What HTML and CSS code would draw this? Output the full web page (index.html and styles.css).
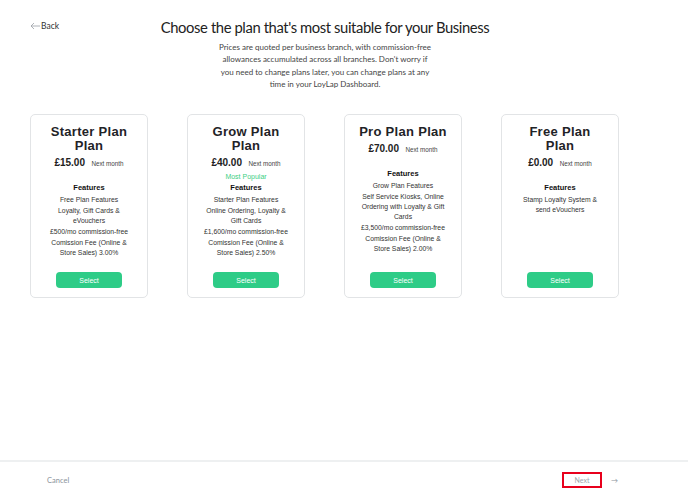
FILE: index.html
```html
<!DOCTYPE html>
<html>
<head>
    <title>Choose a plan</title>
    <link rel="stylesheet" href="styles.css">
</head>
<body>
    <div class="page">
        <div class="content">
            <a class="back" href="#">
                <svg width="10" height="8" viewBox="0 0 10 8"><path d="M10 4H1M4 1L1 4l3 3" fill="none" stroke="#9aa0a6" stroke-width="0.8"/></svg>
                Back
            </a>
            <h1>Choose the plan that's most suitable for your Business</h1>
            <p class="intro">Prices are quoted per business branch, with commission-free allowances accumulated across all branches. Don't worry if you need to change plans later, you can change plans at any time in your LoyLap Dashboard.</p>

            <div class="plans">
                <div class="plan">
                    <h2>Starter Plan Plan</h2>
                    <div class="price"><strong>£15.00</strong> <span>Next month</span></div>
                    <div class="popular"></div>
                    <h3>Features</h3>
                    <ul>
                        <li>Free Plan Features</li>
                        <li>Loyalty, Gift Cards &amp; eVouchers</li>
                        <li>£500/mo commission-free</li>
                        <li>Comission Fee (Online &amp; Store Sales) 3.00%</li>
                    </ul>
                    <button class="select">Select</button>
                </div>
                <div class="plan">
                    <h2>Grow Plan Plan</h2>
                    <div class="price"><strong>£40.00</strong> <span>Next month</span></div>
                    <div class="popular">Most Popular</div>
                    <h3>Features</h3>
                    <ul>
                        <li>Starter Plan Features</li>
                        <li>Online Ordering, Loyalty &amp; Gift Cards</li>
                        <li>£1,600/mo commission-free</li>
                        <li>Comission Fee (Online &amp; Store Sales) 2.50%</li>
                    </ul>
                    <button class="select">Select</button>
                </div>
                <div class="plan">
                    <h2>Pro Plan Plan</h2>
                    <div class="price"><strong>£70.00</strong> <span>Next month</span></div>
                    <div class="popular"></div>
                    <h3>Features</h3>
                    <ul>
                        <li>Grow Plan Features</li>
                        <li>Self Service Kiosks, Online Ordering with Loyalty &amp; Gift Cards</li>
                        <li>£3,500/mo commission-free</li>
                        <li>Comission Fee (Online &amp; Store Sales) 2.00%</li>
                    </ul>
                    <button class="select">Select</button>
                </div>
                <div class="plan">
                    <h2>Free Plan Plan</h2>
                    <div class="price"><strong>£0.00</strong> <span>Next month</span></div>
                    <div class="popular"></div>
                    <h3>Features</h3>
                    <ul>
                        <li>Stamp Loyalty System &amp; send eVouchers</li>
                    </ul>
                    <button class="select">Select</button>
                </div>
            </div>
        </div>

        <div class="footer">
            <a class="cancel" href="#">Cancel</a>
            <div class="next-wrap">
                <button class="next">Next</button>
                <span class="arrow">&rarr;</span>
            </div>
        </div>
    </div>
</body>
</html>
```

FILE: styles.css
```css
html, body {
    margin: 0;
    padding: 0;
    background: #fff;
}

body {
    font-family: "Lato", "Liberation Sans", sans-serif;
    color: #222;
}

.page {
    height: 100vh;
    display: flex;
    flex-direction: column;
}

.content {
    flex: 1;
    width: 650px;
    position: relative;
}

.back {
    position: absolute;
    left: 30px;
    top: 21px;
    font-size: 8.5px;
    color: #333;
    text-decoration: none;
    display: flex;
    align-items: center;
    gap: 1px;
}

h1 {
    margin: 0;
    padding-top: 18px;
    text-align: center;
    font-size: 14.8px;
    line-height: 18px;
    font-weight: 400;
    letter-spacing: -0.4px;
    color: #222;
}

.intro {
    width: 216px;
    margin: 5px auto 0;
    text-align: center;
    font-size: 8px;
    line-height: 12.3px;
    color: #444;
}

.plans {
    display: flex;
    gap: 39px;
    margin: 24px 0 0 30px;
}

.plan {
    width: 118px;
    height: 184px;
    box-sizing: border-box;
    border: 1px solid #e2e4e6;
    border-radius: 5px;
    padding: 10px 14px 9px;
    display: flex;
    flex-direction: column;
    align-items: center;
    text-align: center;
    font-family: "Liberation Sans", Arial, sans-serif;
}

.plan h2 {
    margin: 0;
    font-size: 13px;
    line-height: 14px;
    font-weight: 700;
    color: #1f2327;
    letter-spacing: 0.3px;
}

.price {
    margin-top: 2px;
    line-height: 12px;
}

.price strong {
    font-size: 10px;
    color: #222;
}

.price span {
    font-size: 6.3px;
    color: #444;
    margin-left: 2px;
}

.popular {
    height: 11px;
    margin-top: 1px;
    font-size: 7px;
    line-height: 11px;
    color: #3ccf84;
}

.plan h3 {
    margin: 0;
    font-size: 7.5px;
    line-height: 12px;
    font-weight: 700;
    color: #111;
}

.plan ul {
    list-style: none;
    margin: 1px 0 0;
    padding: 0;
}

.plan li {
    font-size: 6.8px;
    line-height: 10px;
    color: #333;
    margin-bottom: 1px;
}

.select {
    margin-top: auto;
    width: 66px;
    height: 16px;
    flex-shrink: 0;
    border: none;
    border-radius: 4px;
    background: #2ecc87;
    color: #fff;
    font-family: "Liberation Sans", Arial, sans-serif;
    font-size: 7px;
    cursor: pointer;
}

.footer {
    height: 36px;
    border-top: 2px solid #eef0f1;
    display: flex;
    justify-content: space-between;
    align-items: center;
    padding: 0 70px 0 47px;
}

.cancel {
    font-size: 7.5px;
    color: #8a939c;
    text-decoration: none;
}

.next-wrap {
    display: flex;
    align-items: center;
    gap: 9px;
}

.next {
    width: 40px;
    height: 16px;
    box-sizing: border-box;
    border: 2px solid #e8001c;
    background: #fff;
    color: #a0a7ae;
    font-family: "Lato", sans-serif;
    font-size: 7px;
    padding: 0;
}

.arrow {
    font-size: 7px;
    color: #8a939c;
}
```
